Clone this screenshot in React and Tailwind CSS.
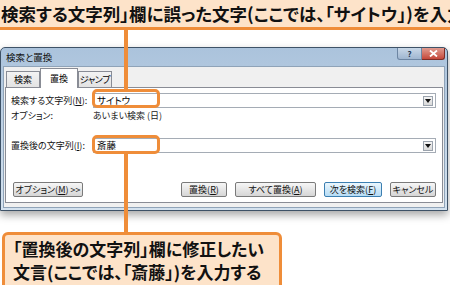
import React from "react";

const jp = { fontFamily: '"Noto Sans CJK JP", "Noto Sans", sans-serif' };

function Btn({ children, w, def }) {
  return (
    <div
      className={
        "h-[15px] flex items-center justify-center whitespace-nowrap rounded-[2px] border text-[9px] leading-none text-[#111] " +
        (def
          ? "border-[#3c7fb1] bg-gradient-to-b from-[#eaf6fd] to-[#b6dcf5]"
          : "border-[#7a7a7a] bg-gradient-to-b from-[#f6f6f6] to-[#d6d6d6]")
      }
      style={{ width: w }}
    >
      {children}
    </div>
  );
}

function Combo({ text }) {
  return (
    <div className="w-[347px] h-[15px] border border-[#a5acb5] bg-white flex items-center justify-between pl-[3px] pr-[2px]">
      <span className="text-[9.5px] leading-none text-black">{text}</span>
      <div className="w-[10px] h-[10px] border border-[#9ba3ad] bg-gradient-to-b from-[#f4f4f4] to-[#d9d9d9] flex items-center justify-center">
        <svg width="6" height="4" viewBox="0 0 6 4">
          <path d="M0 0H6L3 4Z" fill="#111" />
        </svg>
      </div>
    </div>
  );
}

export default function App() {
  return (
    <div className="relative w-[450px] h-[285px] overflow-hidden bg-white" style={jp}>
      {/* top banner */}
      <div className="h-[30px] bg-[#fde3c9] border-b-[3px] border-[#ef8d39] whitespace-nowrap overflow-hidden text-[17.5px] font-bold leading-[27px] pl-[1px] text-[#111] [font-feature-settings:'palt']">
        検索する文字列」欄に誤った文字(ここでは、「サイトウ」)を入力
      </div>

      {/* dialog */}
      <div className="mt-[17px] w-[448px] h-[164px] border border-[#3e5267] rounded-t-[5px] bg-gradient-to-b from-[#abc3dc] to-[#d4e2ef] px-[2px] pb-[2px] flex flex-col shadow-[0_4px_8px_rgba(0,0,0,0.35)] [font-feature-settings:'palt']">
        <div className="h-[18px] flex justify-between">
          <span className="pl-[3px] pt-[3px] text-[9.5px] leading-[12px] text-[#111]">検索と置換</span>
          <div className="flex">
            <div className="w-[25px] h-[12px] border border-[#6d86a3] border-t-0 rounded-bl-[3px] bg-gradient-to-b from-[#c9d8e8] to-[#9fb6d0] flex items-center justify-center text-[8px] leading-none text-[#20364f] font-bold">
              ?
            </div>
            <div className="w-[23px] h-[12px] border border-[#7d2c25] border-t-0 border-l-0 rounded-br-[3px] bg-gradient-to-b from-[#e09b90] to-[#c4463a] flex items-center justify-center">
              <svg width="9" height="7" viewBox="0 0 9 7">
                <path d="M1 0.5L8 6.5M8 0.5L1 6.5" stroke="#fff" strokeWidth="1.8" />
              </svg>
            </div>
          </div>
        </div>
        <div className="flex-1 bg-[#f0f0f0] border border-[#8fa3b8] px-[1px] pb-[4px] flex flex-col">
          {/* tabs */}
          <div className="h-[20px] flex items-end ml-[1px] relative z-10">
            <div className="w-[34px] h-[16px] border border-[#898c95] border-b-0 bg-gradient-to-b from-[#f3f3f3] to-[#e3e3e3] text-[9px] leading-none flex items-center justify-center whitespace-nowrap">
              検索
            </div>
            <div className="w-[38px] h-[20px] border border-[#898c95] border-b-0 bg-white text-[9px] leading-none flex items-center justify-center mb-[-1px] pb-[1px] whitespace-nowrap">
              置換
            </div>
            <div className="w-[34px] h-[16px] border border-[#898c95] border-b-0 bg-gradient-to-b from-[#f3f3f3] to-[#e3e3e3] text-[9px] leading-none flex items-center justify-center whitespace-nowrap tracking-[-0.3px]">
              ジャンプ
            </div>
          </div>
          {/* panel */}
          <div className="flex-1 bg-white border border-[#898c95] pl-[5px] pr-[6px] pt-[5px] flex flex-col text-[9px] text-[#111]">
            <div className="h-[15px] flex items-center">
              <span className="w-[83px] leading-none whitespace-nowrap">
                検索する文字列(<u>N</u>):
              </span>
              <Combo text="サイトウ" />
            </div>
            <div className="h-[14px] flex items-center">
              <span className="w-[82px] leading-none">オプション:</span>
              <span className="leading-none text-[#222]">あいまい検索 (日)</span>
            </div>
            <div className="h-[15px] mt-[16px] flex items-center">
              <span className="w-[83px] leading-none whitespace-nowrap">
                置換後の文字列(<u>I</u>):
              </span>
              <Combo text="斎藤" />
            </div>
            <div className="mt-[29px] flex items-center">
              <div className="ml-[2px]">
                <Btn w={70}>
                  オプション(<u>M</u>) &gt;&gt;
                </Btn>
              </div>
              <div className="flex-1" />
              <div className="flex gap-[8px]">
                <Btn w={46}>
                  置換(<u>R</u>)
                </Btn>
                <Btn w={81}>
                  すべて置換(<u>A</u>)
                </Btn>
                <Btn w={58} def>
                  次を検索(<u>F</u>)
                </Btn>
                <Btn w={46}>キャンセル</Btn>
              </div>
            </div>
          </div>
        </div>
      </div>

      {/* bottom callout */}
      <div className="mt-[21px] ml-[2px] w-[280px] h-[60px] bg-[#fde3c9] border-[3px] border-[#ef8d39] rounded-[6px] pl-[8px] pt-[2px] text-[17px] font-bold leading-[23px] text-[#111] whitespace-nowrap [font-feature-settings:'palt']">
        <div>「置換後の文字列」欄に修正したい</div>
        <div>文言(ここでは、「斎藤」)を入力する</div>
      </div>

      {/* overlays: connector lines and highlight boxes */}
      <div className="absolute left-[124px] top-[30px] w-[4px] h-[59px] bg-[#ef8d39] z-20" />
      <div className="absolute left-[124px] top-[153px] w-[4px] h-[79px] bg-[#ef8d39] z-20" />
      <div className="absolute left-[92px] top-[89px] w-[68px] h-[19px] border-[3px] border-[#ef8d39] rounded-[5px] z-20" />
      <div className="absolute left-[92px] top-[135px] w-[68px] h-[19px] border-[3px] border-[#ef8d39] rounded-[5px] z-20" />
    </div>
  );
}
